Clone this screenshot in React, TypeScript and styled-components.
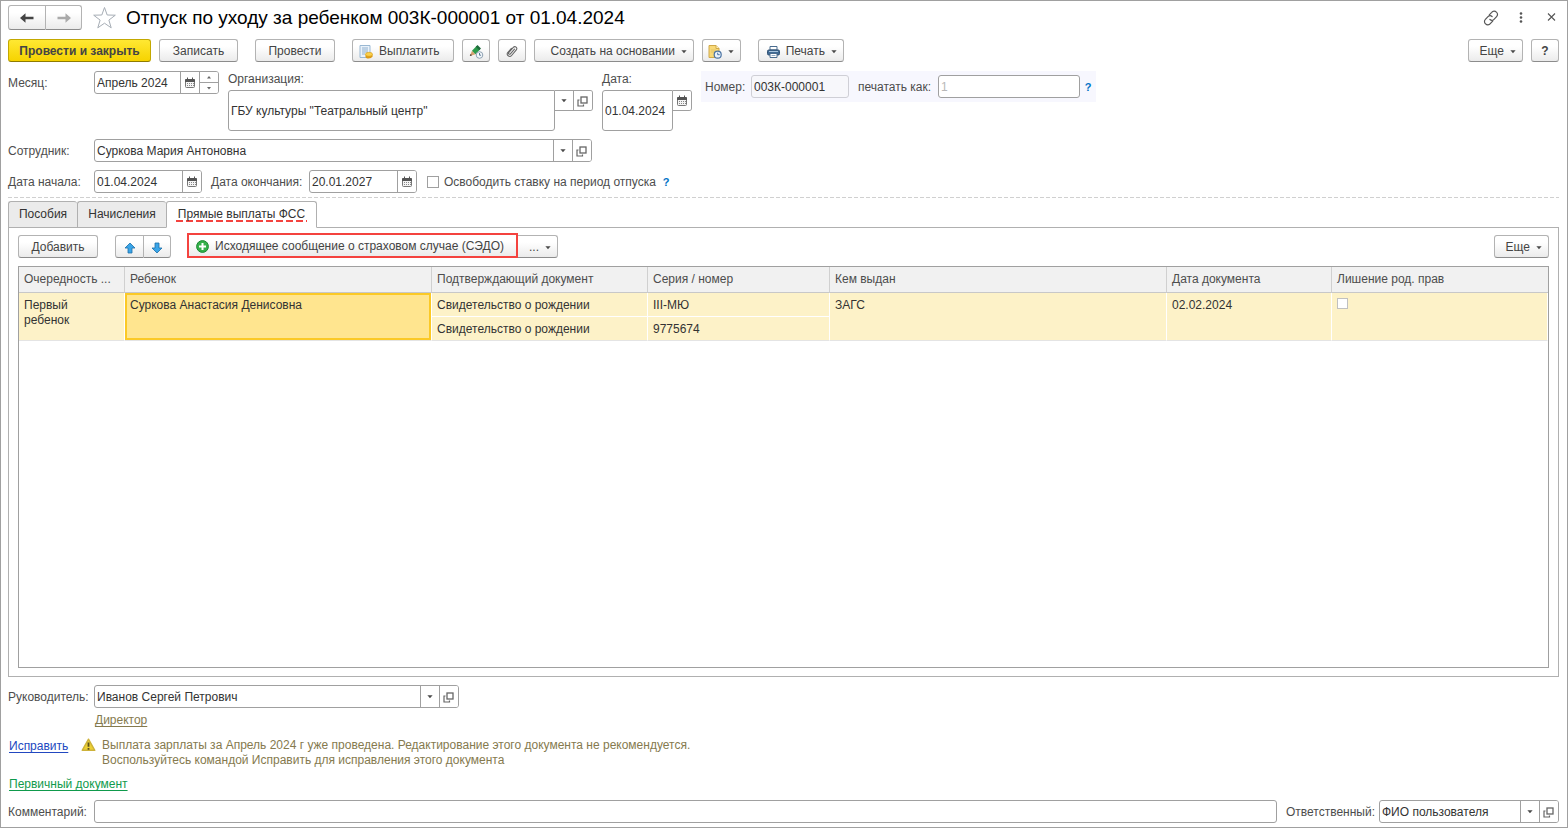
import React from "react";
import styled, { createGlobalStyle, css } from "styled-components";

const line = "#a0a0a0";
const labelColor = "#4d4d4d";
const valueColor = "#333333";

const GlobalStyle = createGlobalStyle`
  * { box-sizing: border-box; }
  body { margin: 0; background: #fff; }
  body, button, input { font-family: "Liberation Sans", Arial, sans-serif; font-size: 12px; line-height: 15px; }
  svg { display: block; flex: none; }
`;

const Page = styled.main`
  display: flex;
  flex-direction: column;
  min-height: 100vh;
  padding: 4px 8px 4px 7px;
  border: 1px solid ${line};
  color: ${labelColor};
`;

/* ---------- buttons ---------- */

const buttonFace = css`
  background: linear-gradient(#ffffff 30%, #ebebeb);
  border: 1px solid #b3b3b3;
  border-bottom-color: #8c8c8c;
  color: #444;
`;

const Button = styled.button<{ $width: number; $primary?: boolean; $join?: "left" | "right"; $align?: "start" | "end" }>`
  display: flex;
  align-items: center;
  justify-content: ${(p) => (p.$align ? "flex-" + p.$align : "center")};
  gap: 6px;
  width: ${(p) => p.$width}px;
  height: 23px;
  padding: 2px 6px 0;
  white-space: nowrap;
  ${buttonFace}
  border-radius: 3px;
  ${(p) =>
    p.$primary &&
    css`
      background: linear-gradient(#ffe833, #f6d300);
      border-color: #c3a800;
      border-bottom-color: #8f7b00;
      font-weight: bold;
    `}
  ${(p) => p.$join === "left" && "border-top-right-radius: 0; border-bottom-right-radius: 0;"}
  ${(p) => p.$join === "right" && "border-left: 0; border-top-left-radius: 0; border-bottom-left-radius: 0;"}
`;

const HighlightedButton = styled(Button)`
  height: 25px;
  margin-left: -1px;
  padding-left: 7px;
  border: 2px solid #f4433f;
  border-radius: 0;
`;

const Joined = styled.div`
  display: flex;
  align-items: flex-end;
`;

const Spacer = styled.div`
  flex: 1;
`;

const Gap = styled.span`
  flex: none;
  width: 9px;
`;

/* ---------- header ---------- */

const Header = styled.header`
  display: flex;
  align-items: center;
  height: 25px;
`;

const NavButton = styled(Button)`
  height: 25px;
  padding: 0;
`;

const StarButton = styled.button`
  margin: 0 9px 0 10px;
  padding: 0;
  border: 0;
  background: none;
`;

const Title = styled.h1`
  flex: 1;
  margin: 0;
  color: #000;
  font-size: 19px;
  font-weight: normal;
  line-height: 24px;
`;

const WindowButtons = styled.div`
  display: flex;
  align-items: center;
  gap: 14px;
`;

const WindowButton = styled.button`
  display: flex;
  align-items: center;
  justify-content: center;
  width: 16px;
  height: 16px;
  padding: 0;
  border: 0;
  background: none;
`;

/* ---------- toolbar ---------- */

const Toolbar = styled.div`
  display: flex;
  gap: 17px;
  margin-top: 9px;
`;

const ToolGroup = styled.div`
  display: flex;
  gap: 8px;
`;

/* ---------- fields ---------- */

const Row = styled.div<{ $top: number }>`
  display: flex;
  align-items: center;
  margin-top: ${(p) => p.$top}px;
`;

const TopRow = styled.div`
  display: flex;
  align-items: flex-start;
  gap: 9px;
  margin-top: 9px;
`;

const Cell = styled.div`
  display: flex;
  align-items: center;
`;

const Stack = styled.div`
  display: flex;
  flex-direction: column;
  gap: 3px;
`;

const Label = styled.label<{ $width?: number }>`
  flex: none;
  width: ${(p) => (p.$width ? p.$width + "px" : "auto")};
  padding-top: 1px;
  white-space: nowrap;
`;

const Field = styled.div<{ $width?: number; $muted?: boolean }>`
  display: flex;
  width: ${(p) => (p.$width ? p.$width + "px" : "auto")};
  ${(p) => !p.$width && "flex: 1;"}
  height: 23px;
  background: ${(p) => (p.$muted ? "#f7f7fb" : "#fff")};
  border: 1px solid ${(p) => (p.$muted ? "#cfcfd6" : line)};
  border-radius: 3px;
  overflow: hidden;
`;

const TextInput = styled.input`
  flex: 1;
  min-width: 0;
  padding: 1px 2px 0;
  border: 0;
  background: none;
  color: ${valueColor};
  &::placeholder { color: #b8b8b8; opacity: 1; }
`;

const Adorn = styled.button`
  display: flex;
  flex: none;
  align-items: center;
  justify-content: center;
  width: 19px;
  padding: 1px 1px 0 0;
  border: 0;
  border-left: 1px solid ${line};
  background: #fff;
`;

const Spin = styled.div`
  display: flex;
  flex-direction: column;
  width: 19px;
  border-left: 1px solid ${line};
`;

const SpinButton = styled.button`
  display: flex;
  flex: 1;
  align-items: center;
  justify-content: center;
  padding: 0;
  border: 0;
  background: #fff;
  & + & { border-top: 1px solid ${line}; }
`;

const TallField = styled.div`
  display: flex;
  align-items: flex-start;
`;

const TallInput = styled(TextInput)<{ $width: number }>`
  flex: none;
  width: ${(p) => p.$width}px;
  height: 41px;
  border: 1px solid ${line};
  border-radius: 3px 0 3px 3px;
`;

const TallButtons = styled.div`
  display: flex;
  height: 21px;
  border: 1px solid ${line};
  border-left: 0;
  border-radius: 0 3px 3px 0;
  overflow: hidden;
  ${Adorn} { width: 18px; border-left: 0; }
  ${Adorn} + ${Adorn} { width: 19px; border-left: 1px solid ${line}; }
`;

const NumberBox = styled.div`
  display: flex;
  align-items: center;
  height: 31px;
  padding: 0 4px;
  background: #f7f7fe;
`;

const Help = styled.button`
  width: 8px;
  margin-left: 4px;
  padding: 1px 0 0;
  border: 0;
  background: none;
  color: #0072c6;
  font-size: 11px;
  font-weight: bold;
`;

const Check = styled.input`
  appearance: none;
  flex: none;
  width: 12px;
  height: 12px;
  margin: 0 5px 0 1px;
  border: 1px solid ${line};
  background: #fff;
`;

const Separator = styled.hr`
  width: 100%;
  height: 1px;
  margin: 4px 0 3px;
  border: 0;
  background: repeating-linear-gradient(90deg, #d0d0d0 0 4px, #fff 4px 6px);
`;

/* ---------- tabs and panel ---------- */

const Tabs = styled.div`
  display: flex;
  z-index: 1;
  height: 27px;
  margin-bottom: -1px;
`;

const Tab = styled.button<{ $width: number; $active?: boolean }>`
  width: ${(p) => p.$width}px;
  padding: 0;
  border: 1px solid #b0b0b0;
  border-right-width: ${(p) => (p.$active ? 1 : 0)}px;
  border-bottom-color: ${(p) => (p.$active ? "#fff" : "#b0b0b0")};
  border-radius: 3px 3px 0 0;
  background: ${(p) => (p.$active ? "#fff" : "#ebebeb")};
  color: ${valueColor};
`;

const Marked = styled.span`
  display: inline-block;
  padding: 0 2px;
  background: repeating-linear-gradient(90deg, #f4433f 0 7px, transparent 7px 10px) left bottom / 100% 2px no-repeat;
`;

const Panel = styled.section`
  display: flex;
  flex: 1;
  flex-direction: column;
  padding: 5px 9px 8px;
  border: 1px solid #b0b0b0;
`;

const PanelTools = styled.div`
  display: flex;
  align-items: flex-end;
  gap: 17px;
`;

const Grid = styled.div`
  flex: 1;
  margin-top: 8px;
  border: 1px solid ${line};
`;

const Table = styled.table`
  width: 100%;
  table-layout: fixed;
  border-collapse: separate;
  border-spacing: 0;
`;

const Th = styled.th`
  height: 26px;
  padding: 0 5px;
  border-right: 1px solid #d0d0d0;
  border-bottom: 1px solid #c8c8c8;
  background: #f1f1f1;
  font-weight: normal;
  text-align: left;
  white-space: nowrap;
  &:last-child { border-right: 0; }
`;

const Td = styled.td<{ $selected?: boolean; $line?: string }>`
  height: 24px;
  padding: 5px 5px 0;
  border-right: 1px solid #fff;
  border-bottom: 1px solid ${(p) => p.$line ?? "#e4e4e4"};
  background: #fdf2c8;
  color: ${valueColor};
  vertical-align: top;
  ${(p) =>
    p.$selected &&
    css`
      box-shadow: inset 0 0 0 2px #fbc926;
      background: #ffe58f;
    `}
`;

const RowCheck = styled(Check)`
  display: block;
  width: 11px;
  height: 11px;
  margin-left: 0;
  border-color: #c0c0c0;
`;

/* ---------- footer ---------- */

const Link = styled.a<{ $color: string }>`
  color: ${(p) => p.$color};
  text-decoration: underline;
  text-underline-offset: 2px;
`;

const Position = styled.div`
  margin: 5px 0 0 87px;
`;

const Warning = styled.div`
  display: flex;
  align-items: flex-start;
  margin: 10px 0 9px 1px;
  color: #857a4e;
  ${Link} { width: 72px; margin-top: 1px; }
  p { margin: 0 0 0 6px; }
`;

const Primary = styled.div`
  margin-left: 1px;
`;

/* ---------- icons ---------- */

const Arrow = ({ color, flip }: { color: string; flip?: boolean }) => (
  <svg width="16" height="12" viewBox="0 0 16 12">
    <g transform={flip ? "translate(16 0) scale(-1 1)" : undefined}>
      <path d="M1 6l5.500-4.800v3.600h8v2.400h-8v3.600z" fill={color} />
    </g>
  </svg>
);

const Star = () => (
  <svg width="25" height="24" viewBox="0 0 25 24">
    <path
      d="M12.500 1.500l2.700 7.500 8.100.2-6.400 4.900 2.300 7.700-6.700-4.600-6.700 4.600 2.300-7.700L1.700 9.200l8.100-.2z"
      fill="#fff"
      stroke="#a6adb5"
    />
  </svg>
);

const Caret = () => (
  <svg width="6" height="4" viewBox="0 0 6 4">
    <path d="M.4.300h5.200L3 3.300z" fill="#4a4a4a" />
  </svg>
);

const SmallCaret = ({ up }: { up?: boolean }) => (
  <svg width="4" height="3" viewBox="0 0 4 3">
    <path d={up ? "M0 2.500h4L2 0z" : "M0 0h4L2 2.500z"} fill="#666" />
  </svg>
);

const Calendar = () => (
  <svg width="10" height="12" viewBox="0 0 10 12">
    <rect x=".5" y="2.500" width="9" height="8" rx="1" fill="#f4f4f4" stroke="#777" />
    <path d="M0 3q0-1 1-1h8q1 0 1 1v2H0z" fill="#555" />
    <path d="M2.500 .5v2M7.500 .5v2" stroke="#555" />
    <path d="M2 6.500h7M2 8.500h7" stroke="#888" strokeDasharray="1 1" />
  </svg>
);

const Open = () => (
  <svg width="11" height="11" viewBox="0 0 11 11" fill="none" stroke="#666">
    <rect x="4" y="1" width="6" height="6" strokeWidth="1.300" />
    <path d="M2.500 4H1v6h5.500V8.500" strokeWidth="1.200" />
  </svg>
);

const LinkIcon = () => (
  <svg width="16" height="16" viewBox="0 0 16 16" fill="none" stroke="#555" strokeWidth="1.200" strokeLinecap="round">
    <path d="M6.300 4.800L8.700 2.300a3 3 0 0 1 4.700-.2 3 3 0 0 1 .2 4.500L11 9.300a3 3 0 0 1-4.100.2" />
    <path d="M9.700 11.200L7.300 13.700a3 3 0 0 1-4.700.2 3 3 0 0 1-.2-4.500L5 6.700a3 3 0 0 1 4.100-.2" />
  </svg>
);

const Dots = () => (
  <svg width="4" height="12" viewBox="0 0 4 12" fill="#555">
    <circle cx="2" cy="1.500" r="1.300" />
    <circle cx="2" cy="5.500" r="1.300" />
    <circle cx="2" cy="9.500" r="1.300" />
  </svg>
);

const Close = () => (
  <svg width="9" height="9" viewBox="0 0 9 9">
    <path d="M1 .5l7 7M8 .5l-7 7" stroke="#555" strokeWidth="1.100" />
  </svg>
);

const PayIcon = () => (
  <svg width="14" height="14" viewBox="0 0 14 14">
    <path d="M1 .5h10v12H1z" fill="#eaf2fa" stroke="#9ab8d3" />
    <path d="M3 3h6M3 5h6M3 7h6M3 9h3" stroke="#8fb0cf" />
    <path d="M6.500 9.500v2q0 2 3 2t4-2v-2z" fill="#dc9a16" />
    <ellipse cx="10" cy="9.300" rx="3.500" ry="2" fill="#fbd04a" stroke="#d39a1d" strokeWidth=".6" />
  </svg>
);

const PencilClock = () => (
  <svg width="15" height="14" viewBox="0 0 15 14">
    <path d="M.8 11L3 5.800 6.500 9.300z" fill="#d8a070" />
    <path d="M.8 11l.8-2 1.500 1.200z" fill="#333" />
    <path d="M3 5.800L7.500 1 11 4.500 6.500 9.300z" fill="#2c9a4a" />
    <path d="M6.800 1.700L8.500 0 12 3.500 10.300 5.200z" fill="#1f6b3c" />
    <circle cx="10.500" cy="10" r="3.300" fill="#f4f8fb" stroke="#8ea1b2" />
    <path d="M10.500 8v2.200h1.600" stroke="#5a7a99" fill="none" />
  </svg>
);

const Clip = () => (
  <svg width="12" height="13" viewBox="0 0 12 13" fill="none" stroke="#666" strokeWidth="1.100" strokeLinecap="round">
    <path d="M8.500 4.200L4.400 8.800c-1 1.100-2.500 0-1.500-1.300L7.300 2.400c1.700-1.900 4.800.3 3 2.500L5.600 10.500c-2 2.300-5.800-.5-3.900-2.900L5.400 3.400" />
  </svg>
);

const DocClock = () => (
  <svg width="14" height="14" viewBox="0 0 14 14">
    <path d="M1 .5h7l3 3v9H1z" fill="#f8d978" stroke="#cfa94a" />
    <path d="M8 .5v3h3" fill="#fff3c4" stroke="#cfa94a" />
    <path d="M3 5h5M3 7h4" stroke="#e3c468" />
    <circle cx="9.700" cy="9.700" r="3.500" fill="#eaf2fb" stroke="#4a73a3" strokeWidth="1.200" />
    <path d="M9.700 7.700v2h2" stroke="#4a73a3" fill="none" />
  </svg>
);

const Printer = () => (
  <svg width="13" height="12" viewBox="0 0 13 12">
    <path d="M3 .5h7V4H3z" fill="#fff" stroke="#4a6c8f" />
    <rect x=".5" y="4" width="12" height="5" rx="1.300" fill="#3f6a94" stroke="#2f5072" />
    <path d="M2 5.500h9" stroke="#a7c3dd" />
    <path d="M3 7.500h7v4H3z" fill="#fff" stroke="#4a6c8f" />
    <path d="M4.500 9.500h4" stroke="#8fa8c0" />
  </svg>
);

const Move = ({ down }: { down?: boolean }) => (
  <svg width="12" height="12" viewBox="0 0 12 12">
    <path
      d={down ? "M6 11L1 6h3V1h4v5h3z" : "M6 1l5 5H8v5H4V6H1z"}
      fill="#3aa5e8"
      stroke="#1c6ea8"
      strokeWidth=".8"
      strokeLinejoin="round"
    />
  </svg>
);

const Plus = () => (
  <svg width="13" height="13" viewBox="0 0 13 13">
    <circle cx="6.500" cy="6.500" r="5.900" fill="#35b04a" stroke="#1d8a35" />
    <path d="M6.500 3v7M3 6.500h7" stroke="#fff" strokeWidth="2" />
  </svg>
);

const WarnIcon = () => (
  <svg width="15" height="14" viewBox="0 0 15 14">
    <path d="M7.500 1.200L13.800 12.300H1.200z" fill="#ecd034" stroke="#cdb23a" strokeWidth="1.400" strokeLinejoin="round" />
    <path d="M7.500 4.500v4.300M7.500 10v1.700" stroke="#5a5020" strokeWidth="1.800" />
  </svg>
);

/* ---------- reusable pieces ---------- */

const Pick = () => (
  <>
    <Adorn aria-label="Выбрать"><Caret /></Adorn>
    <Adorn aria-label="Открыть"><Open /></Adorn>
  </>
);

const DateField = ({ id, value }: { id: string; value: string }) => (
  <Field $width={108}>
    <TextInput id={id} defaultValue={value} />
    <Adorn aria-label="Календарь"><Calendar /></Adorn>
  </Field>
);

const columns: { title: string; width?: number }[] = [
  { title: "Очередность ...", width: 106 },
  { title: "Ребенок", width: 307 },
  { title: "Подтверждающий документ", width: 216 },
  { title: "Серия / номер", width: 182 },
  { title: "Кем выдан", width: 337 },
  { title: "Дата документа", width: 165 },
  { title: "Лишение род. прав" },
];

export default function App() {
  return (
    <>
      <GlobalStyle />
      <Page>
        <Header>
          <Joined>
            <NavButton $width={38} $join="left" aria-label="Назад"><Arrow color="#444" /></NavButton>
            <NavButton $width={36} $join="right" aria-label="Вперед"><Arrow color="#aaa" flip /></NavButton>
          </Joined>
          <StarButton aria-label="В избранное"><Star /></StarButton>
          <Title>Отпуск по уходу за ребенком 003К-000001 от 01.04.2024</Title>
          <WindowButtons>
            <WindowButton aria-label="Ссылка"><LinkIcon /></WindowButton>
            <WindowButton aria-label="Меню"><Dots /></WindowButton>
            <WindowButton aria-label="Закрыть"><Close /></WindowButton>
          </WindowButtons>
        </Header>

        <Toolbar>
          <ToolGroup>
            <Button $width={143} $primary>Провести и закрыть</Button>
            <Button $width={79}>Записать</Button>
          </ToolGroup>
          <Button $width={80}>Провести</Button>
          <ToolGroup>
            <Button $width={102} $align="start"><PayIcon />Выплатить</Button>
            <Button $width={28} aria-label="Редактирование"><PencilClock /></Button>
            <Button $width={28} aria-label="Файлы"><Clip /></Button>
            <Button $width={160} $align="end">Создать на основании<Caret /></Button>
            <Button $width={39} $align="end" aria-label="Отчеты"><DocClock /><Caret /></Button>
          </ToolGroup>
          <Button $width={86} $align="end"><Printer />Печать<Caret /></Button>
          <Spacer />
          <ToolGroup>
            <Button $width={55} $align="end">Еще<Caret /></Button>
            <Button $width={28}><b>?</b></Button>
          </ToolGroup>
        </Toolbar>

        <TopRow>
          <Cell>
            <Label $width={86} htmlFor="month">Месяц:</Label>
            <Field $width={125}>
              <TextInput id="month" defaultValue="Апрель 2024" />
              <Adorn aria-label="Календарь"><Calendar /></Adorn>
              <Spin>
                <SpinButton aria-label="Больше"><SmallCaret up /></SpinButton>
                <SpinButton aria-label="Меньше"><SmallCaret /></SpinButton>
              </Spin>
            </Field>
          </Cell>
          <Stack>
            <Label htmlFor="org">Организация:</Label>
            <TallField>
              <TallInput id="org" $width={327} defaultValue={'ГБУ культуры "Театральный центр"'} />
              <TallButtons><Pick /></TallButtons>
            </TallField>
          </Stack>
          <Stack>
            <Label htmlFor="date">Дата:</Label>
            <TallField>
              <TallInput id="date" $width={71} defaultValue="01.04.2024" />
              <TallButtons><Adorn aria-label="Календарь"><Calendar /></Adorn></TallButtons>
            </TallField>
          </Stack>
          <NumberBox>
            <Label $width={46} htmlFor="number">Номер:</Label>
            <Field $width={98} $muted><TextInput id="number" defaultValue="003К-000001" /></Field>
            <Gap />
            <Label $width={80} htmlFor="printAs">печатать как:</Label>
            <Field $width={142}><TextInput id="printAs" placeholder="1" /></Field>
            <Help>?</Help>
          </NumberBox>
        </TopRow>

        <Row $top={8}>
          <Label $width={86} htmlFor="employee">Сотрудник:</Label>
          <Field $width={498}>
            <TextInput id="employee" defaultValue="Суркова Мария Антоновна" />
            <Pick />
          </Field>
        </Row>

        <Row $top={8}>
          <Label $width={86} htmlFor="start">Дата начала:</Label>
          <DateField id="start" value="01.04.2024" />
          <Gap />
          <Label $width={98} htmlFor="end">Дата окончания:</Label>
          <DateField id="end" value="20.01.2027" />
          <Gap />
          <Check type="checkbox" id="release" />
          <Label $width={214} htmlFor="release">Освободить ставку на период отпуска</Label>
          <Help>?</Help>
        </Row>

        <Separator />

        <Tabs role="tablist">
          <Tab role="tab" $width={69}>Пособия</Tab>
          <Tab role="tab" $width={89}>Начисления</Tab>
          <Tab role="tab" $width={151} $active aria-selected><Marked>Прямые выплаты ФСС</Marked></Tab>
        </Tabs>

        <Panel>
          <PanelTools>
            <Button $width={80}>Добавить</Button>
            <Joined>
              <Button $width={29} $join="left" aria-label="Вверх"><Move /></Button>
              <Button $width={27} $join="right" aria-label="Вниз"><Move down /></Button>
            </Joined>
            <Joined>
              <HighlightedButton $width={331} $align="start"><Plus />Исходящее сообщение о страховом случае (СЭДО)</HighlightedButton>
              <Button $width={40} $join="right" $align="end">...<Caret /></Button>
            </Joined>
            <Spacer />
            <Button $width={55} $align="end">Еще<Caret /></Button>
          </PanelTools>

          <Grid>
            <Table>
              <colgroup>
                {columns.map((c) => <col key={c.title} width={c.width} />)}
              </colgroup>
              <thead>
                <tr>{columns.map((c) => <Th key={c.title}>{c.title}</Th>)}</tr>
              </thead>
              <tbody>
                <tr>
                  <Td rowSpan={2}>Первый<br />ребенок</Td>
                  <Td rowSpan={2} $selected>Суркова Анастасия Денисовна</Td>
                  <Td $line="#fff">Свидетельство о рождении</Td>
                  <Td $line="#fff">III-МЮ</Td>
                  <Td rowSpan={2}>ЗАГС</Td>
                  <Td rowSpan={2}>02.02.2024</Td>
                  <Td rowSpan={2}><RowCheck type="checkbox" aria-label="Лишение род. прав" /></Td>
                </tr>
                <tr>
                  <Td>Свидетельство о рождении</Td>
                  <Td>9775674</Td>
                </tr>
              </tbody>
            </Table>
          </Grid>
        </Panel>

        <Row $top={8}>
          <Label $width={86} htmlFor="head">Руководитель:</Label>
          <Field $width={365}>
            <TextInput id="head" defaultValue="Иванов Сергей Петрович" />
            <Pick />
          </Field>
        </Row>
        <Position><Link href="#position" $color="#857a4e">Директор</Link></Position>

        <Warning>
          <Link href="#fix" $color="#2248c0">Исправить</Link>
          <WarnIcon />
          <p>
            Выплата зарплаты за Апрель 2024 г уже проведена. Редактирование этого документа не рекомендуется.
            <br />
            Воспользуйтесь командой Исправить для исправления этого документа
          </p>
        </Warning>

        <Primary><Link href="#primary" $color="#0f9a4c">Первичный документ</Link></Primary>

        <Row $top={8}>
          <Label $width={86} htmlFor="comment">Комментарий:</Label>
          <Field><TextInput id="comment" /></Field>
          <Gap />
          <Label $width={93} htmlFor="responsible">Ответственный:</Label>
          <Field $width={180}>
            <TextInput id="responsible" defaultValue="ФИО пользователя" />
            <Pick />
          </Field>
        </Row>
      </Page>
    </>
  );
}
